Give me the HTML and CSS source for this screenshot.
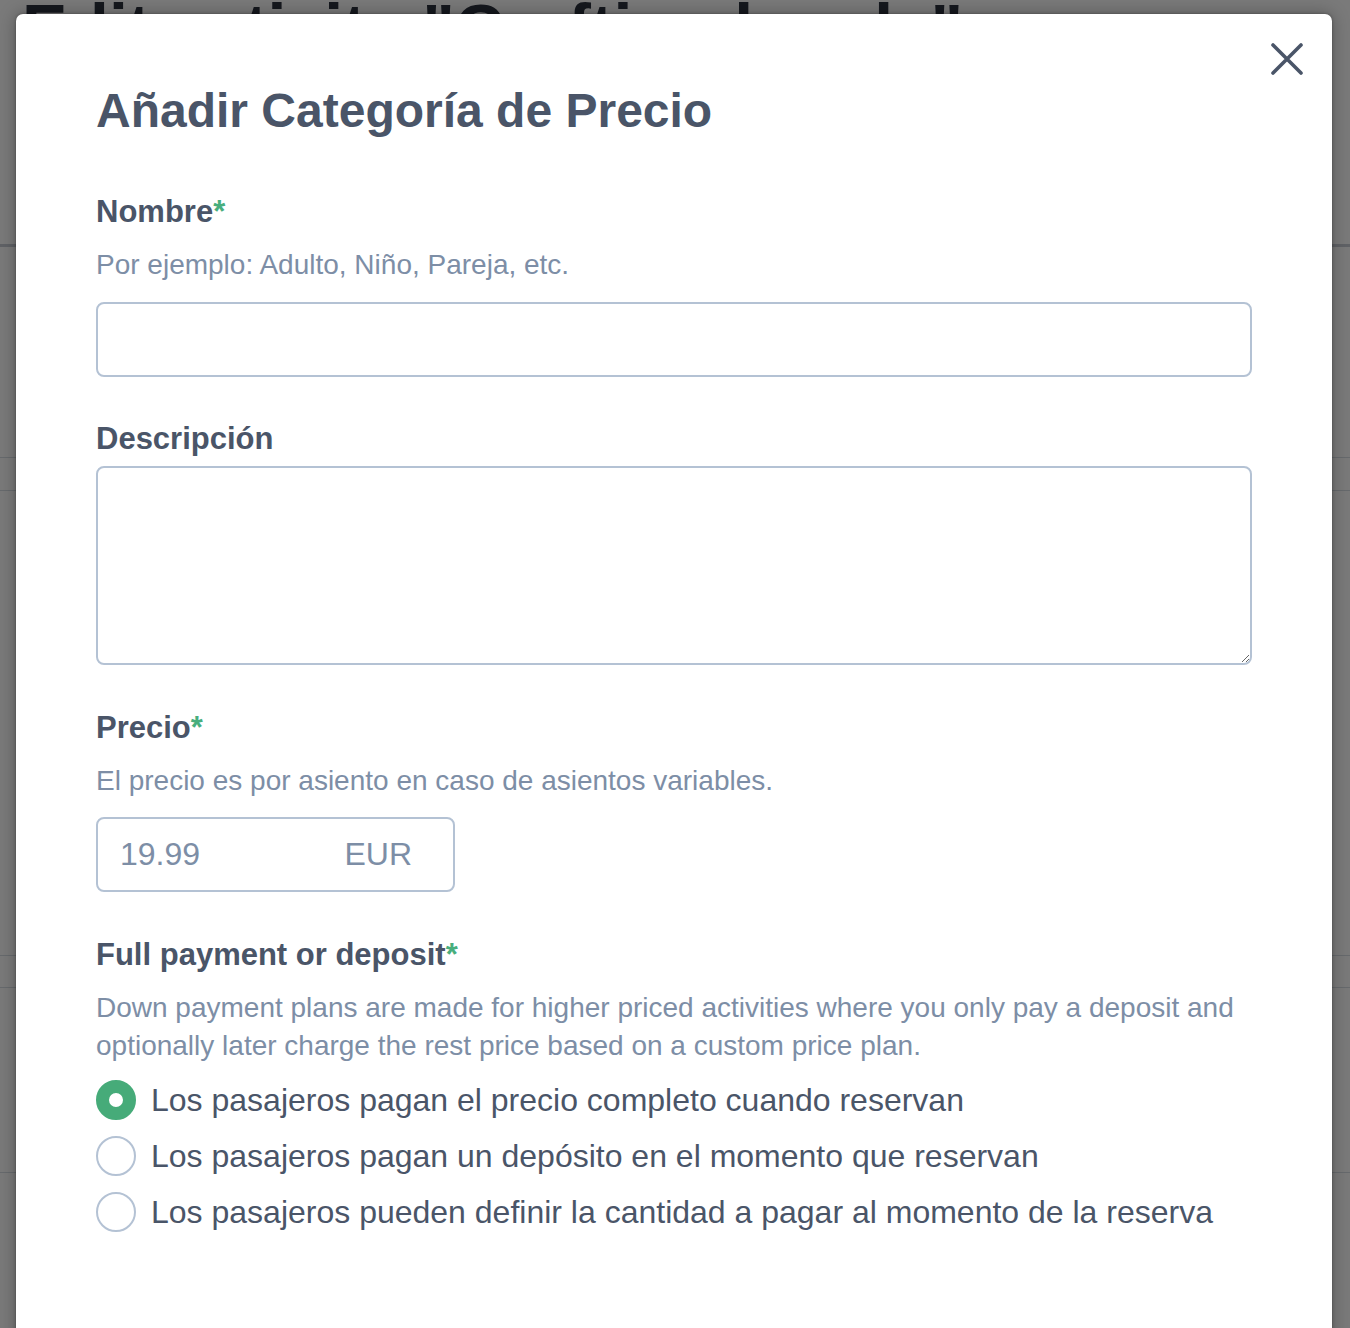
FILE: index.html
```html
<!DOCTYPE html>
<html lang="es">
<head>
<meta charset="utf-8">
<title>Añadir Categoría de Precio</title>
<link rel="stylesheet" href="styles.css">
</head>
<body>
<div class="page">
  <h1 class="page-title">Edit activity "Crafting beads"</h1>
  <div class="page-row row-a"></div>
  <div class="page-row row-b"></div>
  <div class="page-row row-c"></div>
  <div class="page-row row-d"></div>
  <div class="page-row row-e"></div>
  <div class="page-row row-f"></div>
</div>
<div class="backdrop"></div>
<div class="modal" role="dialog">
  <button class="close" type="button" aria-label="Cerrar">
    <svg viewBox="0 0 32 32" width="32" height="32"><path d="M2 2 L30 30 M30 2 L2 30" stroke="#4a5568" stroke-width="3.6" stroke-linecap="round" fill="none"/></svg>
  </button>
  <h2 class="modal-title">Añadir Categoría de Precio</h2>

  <div class="field field-name">
    <label class="label">Nombre<span class="req">*</span></label>
    <p class="help">Por ejemplo: Adulto, Niño, Pareja, etc.</p>
    <input class="input" type="text">
  </div>

  <div class="field field-desc">
    <label class="label">Descripción</label>
    <textarea class="textarea"></textarea>
  </div>

  <div class="field field-price">
    <label class="label">Precio<span class="req">*</span></label>
    <p class="help help-price">El precio es por asiento en caso de asientos variables.</p>
    <div class="price">
      <input class="price-input" type="text" value="19.99">
      <span class="price-unit">EUR</span>
    </div>
  </div>

  <div class="field field-pay">
    <label class="label">Full payment or deposit<span class="req">*</span></label>
    <p class="help">Down payment plans are made for higher priced activities where you only pay a deposit and<br>optionally later charge the rest price based on a custom price plan.</p>
    <div class="radios">
      <label class="radio"><input type="radio" name="pay" checked><span>Los pasajeros pagan el precio completo cuando reservan</span></label>
      <label class="radio"><input type="radio" name="pay"><span>Los pasajeros pagan un depósito en el momento que reservan</span></label>
      <label class="radio"><input type="radio" name="pay"><span>Los pasajeros pueden definir la cantidad a pagar al momento de la reserva</span></label>
    </div>
  </div>
</div>
</body>
</html>
```

FILE: styles.css
```css
html, body {
  margin: 0;
  padding: 0;
  height: 100%;
  overflow: hidden;
}

body {
  background: #ffffff;
  font-family: "Liberation Sans", Arial, sans-serif;
  position: relative;
}

.page {
  padding: 0 0 0 22px;
}

.page-title {
  margin: -6px 0 0 0;
  font-size: 68px;
  line-height: 68px;
  font-weight: 700;
  color: #2d3340;
  white-space: nowrap;
}

.page-row {
  margin-left: -22px;
  border-bottom: 1px solid #d8dde3;
}
.row-a { height: 182px; border-bottom: 3px solid #c9ced5; }
.row-b { height: 210px; }
.row-c { height: 32px; }
.row-d { height: 464px; }
.row-e { height: 31px; }
.row-f { height: 184px; }

.backdrop {
  position: absolute;
  inset: 0;
  background: rgba(0, 0, 0, 0.52);
}

.modal {
  position: absolute;
  top: 14px;
  left: 16px;
  width: 1316px;
  height: 1400px;
  box-sizing: border-box;
  padding: 68px 80px 0 80px;
  background: #ffffff;
  border-radius: 7px;
  box-shadow: 0 0 3px rgba(0, 0, 0, 0.35), 0 0 18px rgba(0, 0, 0, 0.3);
}

.close {
  position: absolute;
  top: 29px;
  right: 29px;
  width: 32px;
  height: 32px;
  padding: 0;
  border: 0;
  background: transparent;
  cursor: pointer;
}
.close svg { display: block; }

.modal-title {
  margin: 0;
  font-size: 48px;
  line-height: 58px;
  font-weight: 700;
  color: #4a5568;
}

.field-name { margin-top: 52px; }
.field-desc { margin-top: 42px; }
.field-price { margin-top: 43px; }
.field-pay { margin-top: 43px; }

.label {
  display: block;
  font-size: 31px;
  line-height: 40px;
  font-weight: 700;
  color: #4a5568;
}

.req {
  color: #48ae7d;
}

.help {
  margin: 14px 0 0 0;
  font-size: 28px;
  line-height: 38px;
  color: #7d8ea6;
}

.input {
  display: block;
  margin-top: 18px;
  width: 100%;
  height: 75px;
  box-sizing: border-box;
  border: 2px solid #b4c2d4;
  border-radius: 8px;
  background: #ffffff;
  font-family: inherit;
  font-size: 32px;
  padding: 0 22px;
  outline: none;
}

.textarea {
  display: block;
  margin-top: 7px;
  width: 100%;
  height: 199px;
  box-sizing: border-box;
  border: 2px solid #b4c2d4;
  border-radius: 8px;
  background: #ffffff;
  font-family: inherit;
  font-size: 32px;
  padding: 12px 22px;
  outline: none;
}

.price {
  display: flex;
  align-items: center;
  margin-top: 17px;
  width: 359px;
  height: 75px;
  box-sizing: border-box;
  border: 2px solid #b4c2d4;
  border-radius: 8px;
}

.price-input {
  flex: 1;
  min-width: 0;
  border: 0;
  padding: 0 0 0 22px;
  background: transparent;
  font-family: inherit;
  font-size: 32px;
  color: #7d8ea6;
  outline: none;
}

.price-unit {
  padding-right: 41px;
  font-size: 32px;
  color: #7d8ea6;
}

.radios {
  display: flex;
  flex-direction: column;
  margin-top: 7px;
}

.radio {
  display: flex;
  align-items: center;
  height: 56px;
  gap: 15px;
  font-size: 32px;
  color: #4a5568;
  white-space: nowrap;
}

.radio input {
  appearance: none;
  -webkit-appearance: none;
  margin: 0;
  width: 40px;
  height: 40px;
  flex: none;
  box-sizing: border-box;
  border: 2px solid #b4c2d4;
  border-radius: 50%;
  background: #ffffff;
}

.radio input:checked {
  border: 13.5px solid #46ab79;
}
```
